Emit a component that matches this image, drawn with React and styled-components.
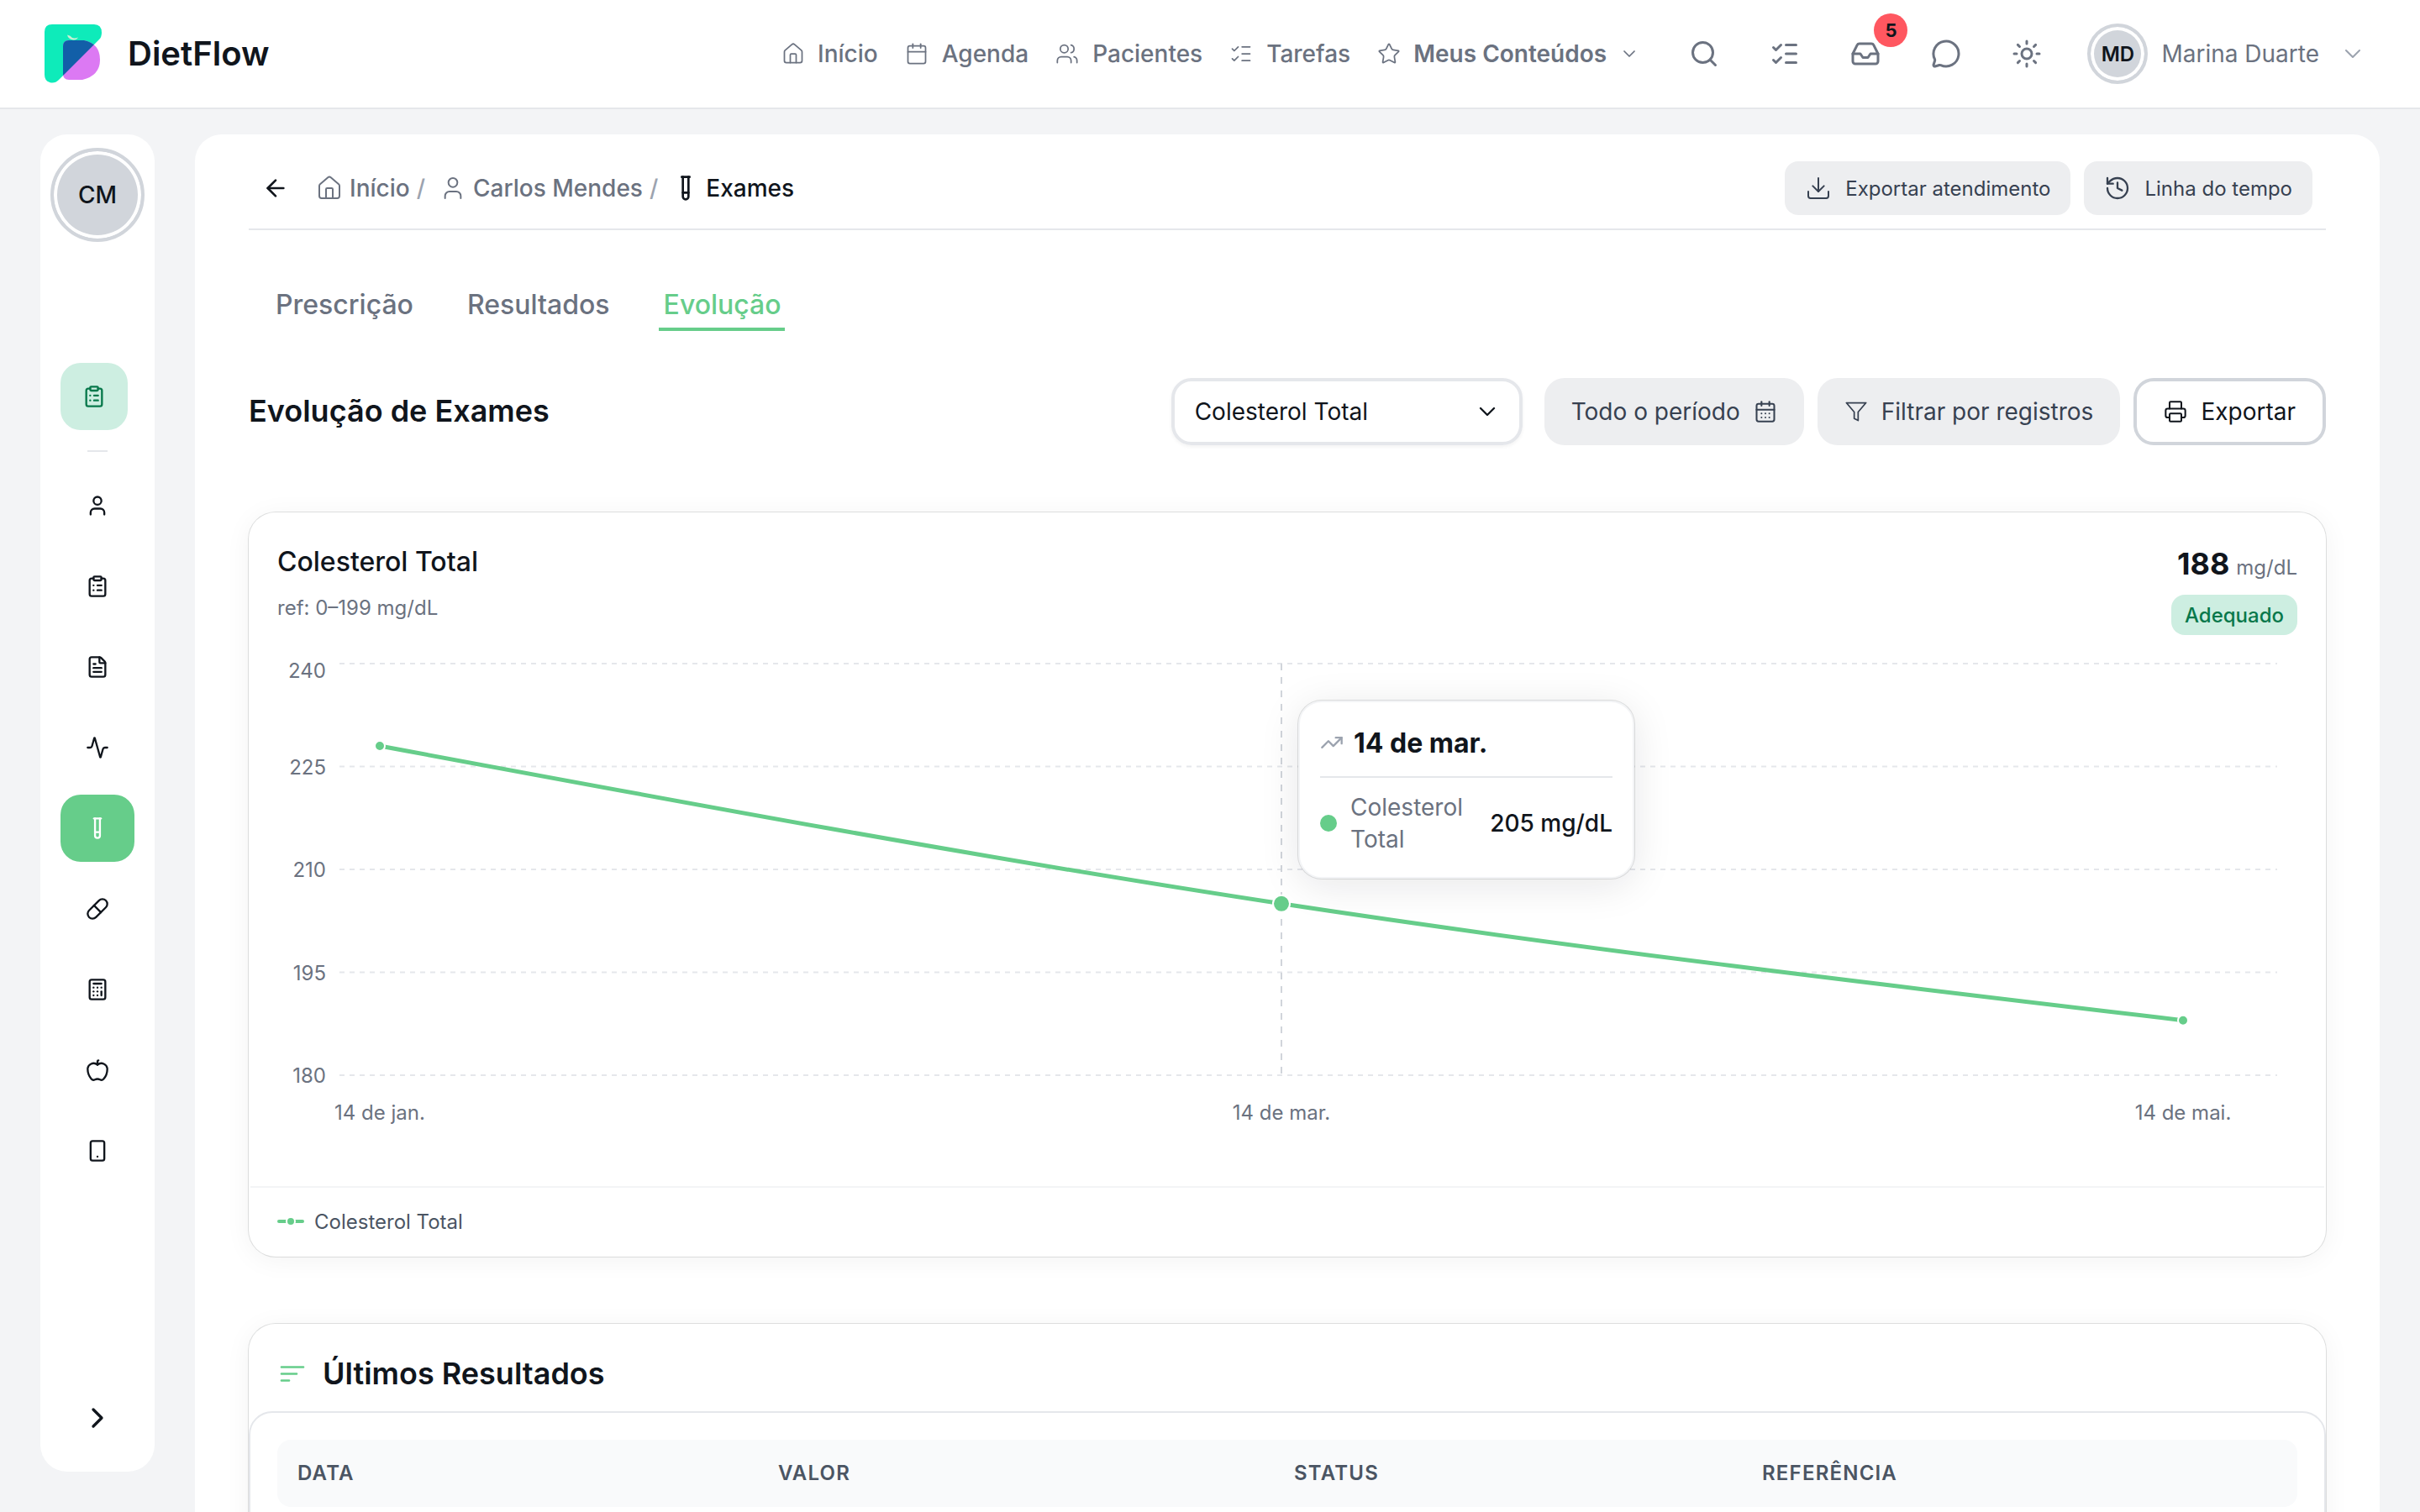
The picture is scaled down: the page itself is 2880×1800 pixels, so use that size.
import React from "react";
import styled, { createGlobalStyle, css } from "styled-components";
import {
  House, Calendar, Users, ListChecks, Star, ChevronDown, Search, Inbox, MessageCircle, Sun,
  ClipboardList, User, FileText, Activity, TestTube, Pill, Calculator, Apple, Smartphone,
  ChevronRight, ArrowLeft, Download, History, CalendarDays, Printer, TrendingUp,
} from "lucide-react";

const c = {
  ink: "#10151c",
  slate: "#374151",
  text: "#4b5563",
  muted: "#6b7280",
  faint: "#9ca3af",
  line: "#e5e7eb",
  ring: "#d1d5db",
  soft: "#edeef0",
  page: "#f3f4f6",
  green: "#66cd8a",
  mint: "#cdeee1",
  forest: "#07784b",
  red: "#ff5760",
};

const GlobalStyle = createGlobalStyle`
  *, *::before, *::after { box-sizing: border-box; }
  body {
    margin: 0;
    overflow: hidden;
    background: ${c.page};
    color: ${c.ink};
    font-family: Inter, "Liberation Sans", sans-serif;
    font-size: 28px;
    -webkit-font-smoothing: antialiased;
  }
  svg { display: block; flex-shrink: 0; }
`;

const Page = styled.div`
  display: flex;
  flex-direction: column;
  width: 2880px;
  height: 1800px;
  overflow: hidden;
`;

const Header = styled.header`
  display: flex;
  align-items: center;
  flex: none;
  height: 130px;
  padding: 0 64px 0 48px;
  background: #fff;
  border-bottom: 2px solid ${c.line};
`;

const Brand = styled.div`
  display: flex;
  align-items: center;
  gap: 26px;
  width: 882px;
  font-size: 40px;
  font-weight: 600;
`;

const BrandName = styled.span`
  padding-bottom: 2px;
`;

const Nav = styled.nav`
  display: flex;
  align-items: center;
  gap: 32px;
`;

const NavItem = styled.a`
  display: flex;
  align-items: center;
  gap: ${(p) => (p.$strong ? 15 : 16)}px;
  color: ${c.muted};
  font-weight: ${(p) => (p.$strong ? 600 : 500)};
  white-space: nowrap;
  &:first-child { gap: 15px; }
`;

const HeaderTools = styled.div`
  display: flex;
  align-items: center;
  gap: 60px;
  margin-left: auto;
  color: ${c.muted};
`;

const Tool = styled.div`
  position: relative;
`;

const Count = styled.span`
  position: absolute;
  left: 28px;
  top: -30px;
  display: flex;
  align-items: center;
  justify-content: center;
  width: 40px;
  height: 40px;
  border-radius: 50%;
  background: ${c.red};
  color: ${c.ink};
  font-size: 22px;
  font-weight: 700;
`;

const Account = styled.div`
  display: flex;
  align-items: center;
  margin-left: 54px;
  gap: 16px;
  color: ${c.muted};
  font-weight: 400;
`;

const Caret = styled(ChevronDown)`
  margin-left: 8px;
  color: ${c.faint};
`;

const Avatar = styled.div`
  display: flex;
  align-items: center;
  justify-content: center;
  width: ${(p) => p.$size}px;
  height: ${(p) => p.$size}px;
  border: 4px solid ${c.ring};
  border-radius: 50%;
  background: ${c.ring};
  box-shadow: inset 0 0 0 4px #fff;
  color: ${c.ink};
  font-size: ${(p) => p.$font}px;
  font-weight: ${(p) => p.$weight};
`;

const Body = styled.div`
  display: flex;
  flex: 1;
  gap: 48px;
  padding: 30px 48px 0;
`;

const Sidebar = styled.aside`
  display: flex;
  flex-direction: column;
  align-items: center;
  flex: none;
  width: 136px;
  height: 1592px;
  padding: 16px 0 44px;
  border-radius: 32px;
  background: #fff;
`;

const SideList = styled.div`
  display: flex;
  flex-direction: column;
  align-items: flex-start;
  width: 88px;
  gap: 16px;
  margin-top: 144px;
`;

const SideItem = styled.button`
  display: flex;
  align-items: center;
  justify-content: center;
  width: 88px;
  height: 80px;
  padding: 0;
  border: 0;
  border-radius: 24px;
  background: transparent;
  color: ${c.ink};
  ${(p) => p.$active && css`background: ${c.green}; color: #fff;`}
  ${(p) => p.$current && css`width: 80px; background: ${c.mint}; color: ${c.forest};`}
`;

const SideDivider = styled.div`
  align-self: center;
  width: 24px;
  height: 2px;
  margin: 8px 0;
  background: ${c.line};
`;

const SideToggle = styled.div`
  margin-top: auto;
`;

const Panel = styled.main`
  flex: 1;
  min-width: 0;
  padding: 0 64px;
  border-radius: 32px 32px 0 0;
  background: #fff;
`;

const PanelTop = styled.div`
  display: flex;
  align-items: center;
  height: 114px;
  padding: 32px 16px 16px;
  border-bottom: 2px solid ${c.line};
`;

const Crumbs = styled.div`
  display: flex;
  align-items: center;
  gap: 17px;
  margin-left: 32px;
`;

const Crumb = styled.span`
  display: flex;
  align-items: center;
  gap: 8px;
  color: ${(p) => (p.$current ? c.ink : c.muted)};
  font-weight: 500;
`;

const Slash = styled.i`
  color: ${c.faint};
  font-style: normal;
`;

const TopActions = styled.div`
  display: flex;
  gap: 16px;
  margin-left: auto;
`;

const SmallButton = styled.button`
  display: flex;
  align-items: center;
  gap: 16px;
  height: 64px;
  padding: 0 24px;
  border: 0;
  border-radius: 16px;
  background: ${c.soft};
  color: ${c.slate};
  font: 400 24px Inter, sans-serif;
  white-space: nowrap;
`;

const Tabs = styled.div`
  display: flex;
  gap: 52px;
  margin-top: 60px;
  padding-left: 26px;
`;

const Tab = styled.div`
  display: flex;
  align-items: center;
  height: 60px;
  padding: 0 ${(p) => (p.$active ? 4 : 6)}px 0 6px;
  border-bottom: 4px solid ${(p) => (p.$active ? c.green : "transparent")};
  color: ${(p) => (p.$active ? c.green : c.muted)};
  font-size: 32px;
  font-weight: 500;
`;

const SectionBar = styled.div`
  display: flex;
  align-items: center;
  justify-content: space-between;
  height: 80px;
  margin-top: 56px;
`;

const SectionTitle = styled.h1`
  margin: 0;
  padding-bottom: 2px;
  font-size: 36px;
  font-weight: 600;
`;

const Filters = styled.div`
  display: flex;
  gap: 16px;
`;

const Select = styled.div`
  display: flex;
  align-items: center;
  justify-content: space-between;
  width: 418px;
  height: 80px;
  margin-right: 10px;
  padding: 0 22px 0 24px;
  border: 4px solid ${c.line};
  border-radius: 24px;
  box-shadow: 0 2px 4px rgba(0, 0, 0, 0.05);
`;

const FilterButton = styled.button`
  display: flex;
  align-items: center;
  gap: 16px;
  height: 80px;
  padding: 0 32px;
  border: 0;
  border-radius: 24px;
  background: ${c.soft};
  color: ${c.slate};
  font: 400 28px Inter, sans-serif;
  white-space: nowrap;
  ${(p) => p.$outline && css`border: 4px solid ${c.ring}; background: #fff; color: ${c.ink};`}
`;

const Card = styled.section`
  display: flex;
  flex-direction: column;
  height: ${(p) => p.$height}px;
  margin-top: 80px;
  border-radius: 32px;
  background: #fff;
  box-shadow: 0 0 0 1px rgba(16, 21, 28, 0.12), 0 4px 32px rgba(16, 21, 28, 0.05);
`;

const CardHead = styled.div`
  display: flex;
  justify-content: space-between;
  height: 150px;
  padding: 34px 34px 0;
`;

const CardTitle = styled.h2`
  margin: 1px 0 0;
  font-size: 32px;
  font-weight: 500;
  line-height: 48px;
`;

const Reference = styled.p`
  margin: 13px 0 0;
  color: ${c.muted};
  font-size: 24px;
  line-height: 36px;
`;

const Latest = styled.div`
  display: flex;
  flex-direction: column;
  align-items: flex-end;
`;

const Amount = styled.div`
  display: flex;
  align-items: baseline;
  gap: 8px;
  height: 54px;
  font-size: 36px;
  font-weight: 700;
  line-height: 54px;
`;

const Unit = styled.span`
  color: ${c.muted};
  font-size: 24px;
  font-weight: 400;
`;

const Status = styled.span`
  display: flex;
  align-items: center;
  height: 48px;
  margin-top: 10px;
  padding: 0 16px;
  border-radius: 16px;
  background: ${c.mint};
  color: ${c.forest};
  font-size: 24px;
  font-weight: 500;
`;

const ChartArea = styled.div`
  position: relative;
  height: 652px;
`;

const AxisText = styled.text`
  fill: ${c.muted};
  font-family: Inter, sans-serif;
  font-size: 24px;
`;

const Tooltip = styled.div`
  position: absolute;
  left: 1249px;
  top: 74px;
  width: 400px;
  height: 212px;
  padding: 22px 24px;
  border: 2px solid ${c.page};
  border-radius: 28px;
  background: #fff;
  box-shadow: 0 0 0 1px rgba(16, 21, 28, 0.12), 0 8px 48px rgba(16, 21, 28, 0.1);
`;

const TooltipHead = styled.div`
  display: flex;
  align-items: center;
  gap: 12px;
  height: 68px;
  padding-bottom: 14px;
  border-bottom: 2px solid ${c.line};
  font-size: 32px;
  font-weight: 700;
`;

const TooltipRow = styled.div`
  display: flex;
  align-items: center;
  justify-content: space-between;
  margin-top: 16px;
  line-height: 38px;
`;

const Series = styled.div`
  display: flex;
  align-items: center;
  gap: 16px;
  width: 180px;
  color: ${c.muted};
`;

const Dot = styled.span`
  flex: none;
  width: 20px;
  height: 20px;
  border-radius: 50%;
  background: ${c.green};
`;

const Reading = styled.span`
  font-weight: 500;
  white-space: nowrap;
`;

const Legend = styled.div`
  display: flex;
  align-items: center;
  gap: 10px;
  height: 84px;
  margin: 0 2px;
  padding: 0 32px 2px;
  border-top: 2px solid ${c.page};
  color: ${c.text};
  font-size: 24px;
`;

const ResultsHead = styled.div`
  display: flex;
  align-items: center;
  gap: 21px;
  flex: none;
  height: 104px;
  padding: 14px 37px 0;
`;

const ResultsTitle = styled.h2`
  margin: 0;
  font-size: 36px;
  font-weight: 600;
`;

const ResultsBody = styled.div`
  flex: 1;
  padding: 32px;
  border: 2px solid ${c.line};
  border-radius: 28px;
`;

const TableHead = styled.div`
  display: grid;
  grid-template-columns: 572px 614px 557px 1fr;
  align-items: center;
  height: 80px;
  padding: 0 24px 2px;
  border-radius: 16px;
  background: #f9fafb;
  color: ${c.text};
  font-size: 24px;
  font-weight: 600;
  letter-spacing: 1.2px;
`;

function Logo() {
  return (
    <svg width="78" height="78" viewBox="48 25 78 78">
      <defs>
        <clipPath id="leafClip">
          <path d="M82 48H100Q119 52 119 71T98 95H82Q75 95 75 88V55Q75 48 82 48Z" />
        </clipPath>
      </defs>
      <path d="M62 29H112Q121 29 121 39Q121 44 118 47L70 95Q65 100 59 98Q53 96 53 89V38Q53 29 62 29Z" fill="#0eebba" />
      <path d="M82 48H100Q119 52 119 71T98 95H82Q75 95 75 88V55Q75 48 82 48Z" fill="#dc79f3" />
      <path d="M62 29H112Q121 29 121 39Q121 44 118 47L70 95H53V29Z" fill="#125fa8" clipPath="url(#leafClip)" />
      <path d="M80 41.5Q84 42 86 45Q89 46 93 44.5Q91 48 87 47.5Q81 46.500 80 41.500Z" fill="#c8efd4" />
    </svg>
  );
}

function FilterIcon() {
  return (
    <svg width="28" height="28" viewBox="0 0 24 24" fill="none" stroke="currentColor" strokeWidth="1.5" strokeLinejoin="round">
      <polygon points="22 3 2 3 10 12.46 10 19 14 21 14 12.46 22 3" />
    </svg>
  );
}

const points = [
  { label: "14 de jan.", x: 452, value: 228 },
  { label: "14 de mar.", x: 1525, value: 205 },
  { label: "14 de mai.", x: 2598, value: 188 },
];
const CHART_LEFT = 296;
const CHART_TOP = 760;
const toY = (v) => 790 + ((240 - v) * 490) / 60;

function monotonePath(pts) {
  const [a, b, d] = pts;
  const s0 = (b.y - a.y) / (b.x - a.x);
  const s1 = (d.y - b.y) / (d.x - b.x);
  const mid = (s0 + s1) / 2;
  const first = (3 * s0 - mid) / 2;
  const last = (3 * s1 - mid) / 2;
  const h0 = (b.x - a.x) / 3;
  const h1 = (d.x - b.x) / 3;
  return `M${a.x} ${a.y}C${a.x + h0} ${a.y + h0 * first} ${b.x - h0} ${b.y - h0 * mid} ${b.x} ${b.y}` +
    `C${b.x + h1} ${b.y + h1 * mid} ${d.x - h1} ${d.y - h1 * last} ${d.x} ${d.y}`;
}

function Chart() {
  const pts = points.map((p) => ({ ...p, y: toY(p.value) }));
  return (
    <svg width="2472" height="652" viewBox={`${CHART_LEFT} ${CHART_TOP} 2472 652`}>
      {[240, 225, 210, 195, 180].map((v) => (
        <g key={v}>
          <line x1="404" x2="2710" y1={toY(v)} y2={toY(v)} stroke={c.line} strokeWidth="2" strokeDasharray="6 6" />
          <AxisText x="388" y={toY(v) + (v === 240 ? 17 : 9)} textAnchor="end">{v}</AxisText>
        </g>
      ))}
      <line x1="1525" x2="1525" y1="790" y2="1280" stroke={c.ring} strokeWidth="2" strokeDasharray="8 8" />
      <path d={monotonePath(pts)} fill="none" stroke={c.green} strokeWidth="5" />
      {pts.map((p, i) => (
        <g key={p.label}>
          <circle cx={p.x} cy={p.y} r={i === 1 ? 10 : 6} fill={c.green} stroke="#fff" strokeWidth="2" />
          <AxisText x={p.x} y="1333" textAnchor="middle">{p.label}</AxisText>
        </g>
      ))}
    </svg>
  );
}

const navItems = [
  { icon: House, label: "Início" },
  { icon: Calendar, label: "Agenda" },
  { icon: Users, label: "Pacientes" },
  { icon: ListChecks, label: "Tarefas" },
];
const sideIcons = [User, ClipboardList, FileText, Activity, TestTube, Pill, Calculator, Apple, Smartphone];

export default function App() {
  return (
    <Page>
      <GlobalStyle />
      <Header>
        <Brand><Logo /><BrandName>DietFlow</BrandName></Brand>
        <Nav>
          {navItems.map(({ icon: Icon, label }) => (
            <NavItem key={label}><Icon size={28} strokeWidth={1.5} />{label}</NavItem>
          ))}
          <NavItem $strong><Star size={28} strokeWidth={1.5} />Meus Conteúdos<ChevronDown size={24} strokeWidth={1.75} /></NavItem>
        </Nav>
        <HeaderTools>
          <Tool><Search size={36} /></Tool>
          <Tool><ListChecks size={36} /></Tool>
          <Tool><Inbox size={36} /><Count>5</Count></Tool>
          <Tool><MessageCircle size={36} /></Tool>
          <Tool><Sun size={36} /></Tool>
        </HeaderTools>
        <Account>
          <Avatar $size={72} $font={24} $weight={600}>MD</Avatar>
          Marina Duarte
          <Caret size={32} strokeWidth={1.5} />
        </Account>
      </Header>
      <Body>
        <Sidebar>
          <Avatar $size={112} $font={28} $weight={500}>CM</Avatar>
          <SideList>
            <SideItem $current><ClipboardList size={28} /></SideItem>
            <SideDivider />
            {sideIcons.map((Icon, i) => (
              <SideItem key={i} $active={Icon === TestTube}><Icon size={28} /></SideItem>
            ))}
          </SideList>
          <SideToggle><ChevronRight size={40} /></SideToggle>
        </Sidebar>
        <Panel>
          <PanelTop>
            <ArrowLeft size={32} />
            <Crumbs>
              <Crumb><House size={32} strokeWidth={1.5} />Início <Slash>/</Slash></Crumb>
              <Crumb><User size={32} strokeWidth={1.5} />Carlos Mendes <Slash>/</Slash></Crumb>
              <Crumb $current><TestTube size={32} />Exames</Crumb>
            </Crumbs>
            <TopActions>
              <SmallButton><Download size={32} strokeWidth={1.5} />Exportar atendimento</SmallButton>
              <SmallButton><History size={32} strokeWidth={1.75} />Linha do tempo</SmallButton>
            </TopActions>
          </PanelTop>
          <Tabs>
            <Tab>Prescrição</Tab>
            <Tab>Resultados</Tab>
            <Tab $active>Evolução</Tab>
          </Tabs>
          <SectionBar>
            <SectionTitle>Evolução de Exames</SectionTitle>
            <Filters>
              <Select>Colesterol Total<ChevronDown size={32} strokeWidth={1.75} /></Select>
              <FilterButton>Todo o período<CalendarDays size={28} strokeWidth={1.75} /></FilterButton>
              <FilterButton><FilterIcon />Filtrar por registros</FilterButton>
              <FilterButton $outline><Printer size={28} strokeWidth={1.75} />Exportar</FilterButton>
            </Filters>
          </SectionBar>
          <Card $height={886}>
            <CardHead>
              <div>
                <CardTitle>Colesterol Total</CardTitle>
                <Reference>ref: 0–199 mg/dL</Reference>
              </div>
              <Latest>
                <Amount>188<Unit>mg/dL</Unit></Amount>
                <Status>Adequado</Status>
              </Latest>
            </CardHead>
            <ChartArea>
              <Chart />
              <Tooltip>
                <TooltipHead><TrendingUp size={28} color={c.faint} />14 de mar.</TooltipHead>
                <TooltipRow>
                  <Series><Dot />Colesterol Total</Series>
                  <Reading>205 mg/dL</Reading>
                </TooltipRow>
              </Tooltip>
            </ChartArea>
            <Legend>
              <svg width="34" height="16" viewBox="0 0 34 16">
                <path d="M2 8H30" stroke={c.green} strokeWidth="4" strokeLinecap="round" />
                <circle cx="16" cy="8" r="5" fill={c.green} stroke="#fff" strokeWidth="2" />
              </svg>
              Colesterol Total
            </Legend>
          </Card>
          <Card $height={400}>
            <ResultsHead>
              <svg width="30" height="24" viewBox="0 0 30 24">
                <path d="M2 4.500H28M2 12.500H20M2 20.500H11" fill="none" stroke={c.green} strokeWidth="2.700" strokeLinecap="round" />
              </svg>
              <ResultsTitle>Últimos Resultados</ResultsTitle>
            </ResultsHead>
            <ResultsBody>
              <TableHead><span>DATA</span><span>VALOR</span><span>STATUS</span><span>REFERÊNCIA</span></TableHead>
            </ResultsBody>
          </Card>
        </Panel>
      </Body>
    </Page>
  );
}
